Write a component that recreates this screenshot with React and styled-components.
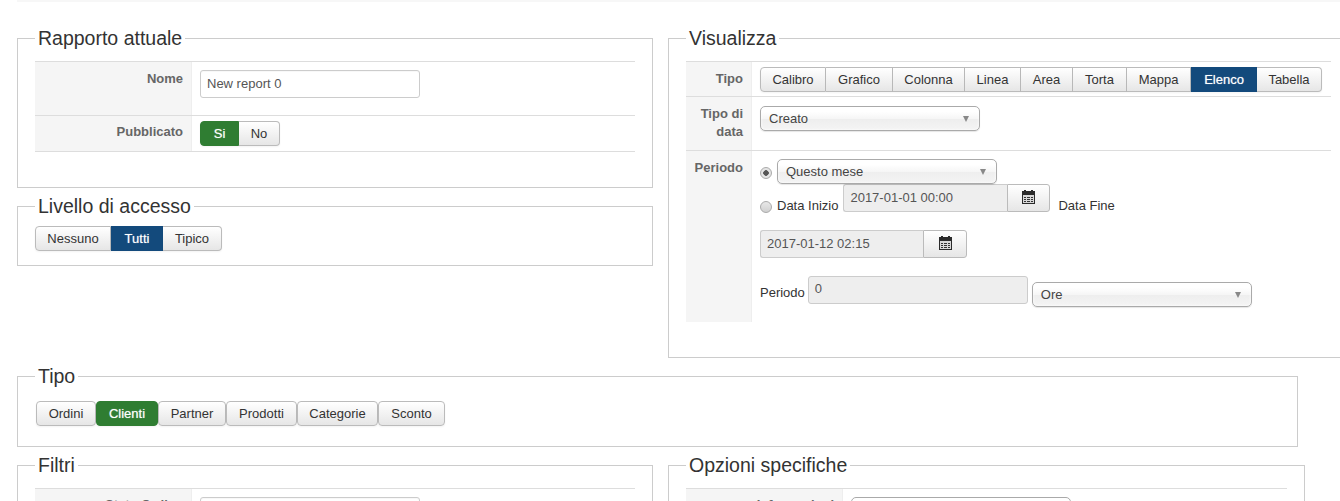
import React from 'react';
import styled, { createGlobalStyle } from 'styled-components';

const GlobalStyle = createGlobalStyle`
  html, body {
    margin: 0;
    height: 501px;
    overflow: hidden;
    background: #fff;
    font-family: "Liberation Sans", Arial, sans-serif;
    font-size: 13px;
    color: #515151;
  }
`;

const Page = styled.div`
  width: 1340px;
  height: 501px;
  overflow: hidden;
  padding-left: 17px;
  box-sizing: border-box;
`;

const TopStrip = styled.div`
  height: 2px;
  margin-bottom: 24px;
  background: #f7f7f7;
`;

const Row = styled.div`
  display: flex;
  align-items: flex-start;
  gap: 15px;
  width: 1400px;
`;

const Column = styled.div`
  width: ${(p) => p.$width}px;
  flex: none;
`;

const Fieldset = styled.fieldset`
  box-sizing: border-box;
  width: ${(p) => (p.$width ? `${p.$width}px` : '100%')};
  height: ${(p) => p.$height}px;
  margin: ${(p) => p.$mt || 0}px 0 ${(p) => p.$mb || 0}px;
  padding: 0 17px;
  border: 1px solid #ccc;
`;

const Legend = styled.legend`
  padding: 0 3px;
  font-size: 19.5px;
  line-height: 24px;
  color: #333;
`;

const Table = styled.div`
  border-top: 1px solid #ddd;
  margin-top: 11px;
  width: ${(p) => (p.$width ? `${p.$width}px` : 'auto')};
`;

const TableRow = styled.div`
  display: flex;
  height: ${(p) => p.$height}px;
  box-sizing: border-box;
  border-bottom: ${(p) => (p.$open ? '0' : '1px solid #ddd')};
`;

const Label = styled.div`
  flex: none;
  box-sizing: border-box;
  width: ${(p) => p.$width}px;
  padding: ${(p) => p.$pad || 8}px 8px 0 0;
  background: #f5f5f5;
  border-right: 1px solid #eee;
  text-align: right;
  font-weight: bold;
  line-height: 18px;
  color: #666;
`;

const Cell = styled.div`
  flex: 1;
  min-width: 0;
  padding: ${(p) => p.$pad || '8px'} 8px 0;
`;

const TextInput = styled.input`
  display: block;
  box-sizing: border-box;
  width: 220px;
  height: 28px;
  padding: 0 6px 2px;
  border: 1px solid #ccc;
  border-radius: 3px;
  background: #fff;
  font: 13px "Liberation Sans", Arial, sans-serif;
  color: #555;
  box-shadow: inset 0 1px 1px rgba(0, 0, 0, 0.03);
`;

const ButtonGroup = styled.div`
  display: inline-flex;
  vertical-align: top;
  margin: ${(p) => p.$margin || '0'};
`;

const Btn = styled.button`
  box-sizing: border-box;
  height: 25px;
  padding: 0;
  width: ${(p) => p.$width}px;
  font: 13px "Liberation Sans", Arial, sans-serif;
  color: ${(p) => (p.$active ? '#fff' : '#333')};
  border: 1px solid ${(p) => (p.$active ? p.$active : '#bbb')};
  border-left-width: ${(p) => (p.$first || p.$active ? 1 : 0)}px;
  background: ${(p) => p.$active || 'linear-gradient(#fff, #e6e6e6)'};
  border-radius: ${(p) => (p.$first ? '4px 0 0 4px' : p.$last ? '0 4px 4px 0' : '0')};
  box-shadow: 0 1px 2px rgba(0, 0, 0, 0.05);
  text-shadow: ${(p) => (p.$active ? '0 0 1px rgba(255,255,255,.6)' : 'none')};
`;

const SoloBtn = styled(Btn)`
  border-left-width: 1px;
  border-radius: 4px;
`;

const SelectBox = styled.div`
  position: relative;
  box-sizing: border-box;
  flex: none;
  width: ${(p) => p.$width || 220}px;
  height: 25px;
  margin-top: ${(p) => p.$mt || 0}px;
  padding-left: 8px;
  line-height: 23px;
  color: #444;
  border: 1px solid #aaa;
  border-radius: 5px;
  background: linear-gradient(#fff 20%, #f6f6f6 50%, #eee 52%, #f4f4f4 100%);
  box-shadow: inset 0 0 3px #fff, 0 1px 1px rgba(0, 0, 0, 0.1);
  &::after {
    content: '';
    position: absolute;
    right: 10px;
    top: 9px;
    border-left: 3.5px solid transparent;
    border-right: 3.5px solid transparent;
    border-top: 6px solid #888;
  }
`;

const Line = styled.div`
  display: flex;
  align-items: flex-start;
  margin-bottom: ${(p) => p.$mb || 0}px;
`;

const Radio = styled.span`
  flex: none;
  box-sizing: border-box;
  width: 12px;
  height: 12px;
  margin-right: 5px;
  margin-top: ${(p) => p.$mt}px;
  border-radius: 50%;
  border: 1px solid #aaa;
  background: ${(p) =>
    p.$checked
      ? 'radial-gradient(circle, #555 0 2.5px, #e4e4e4 3px)'
      : 'linear-gradient(#e8e8e8, #d0d0d0)'};
`;

const InlineText = styled.span`
  flex: none;
  margin: ${(p) => p.$margin || '0'};
  line-height: 18px;
  color: #333;
`;

const DateWrap = styled.div`
  display: flex;
  flex: none;
`;

const DateInput = styled.div`
  box-sizing: border-box;
  width: ${(p) => p.$width}px;
  height: 28px;
  padding: 5px 6px 0;
  line-height: 16px;
  color: #555;
  background: #eee;
  border: 1px solid #ccc;
  border-right: 0;
  border-radius: 3px 0 0 3px;
`;

const DateButton = styled.div`
  box-sizing: border-box;
  width: ${(p) => p.$width}px;
  height: 28px;
  padding-top: 5px;
  text-align: center;
  border: 1px solid #bbb;
  border-radius: 0 3px 3px 0;
  background: linear-gradient(#fff, #e6e6e6);
`;

const PeriodInput = styled(DateInput)`
  width: 220px;
  margin-right: 4px;
  border-right: 1px solid #ccc;
  border-radius: 3px;
  padding-top: 4px;
`;

const CalendarIcon = () => (
  <svg width="13" height="14" viewBox="0 0 13 14">
    <rect x="0" y="1" width="13" height="13" fill="#2b2b2b" />
    <rect x="2" y="0" width="2" height="3" fill="#2b2b2b" />
    <rect x="9" y="0" width="2" height="3" fill="#2b2b2b" />
    <rect x="1" y="5" width="11" height="8" fill="#d8d8d8" />
    <path d="M2 7.5h9M2 9.5h9M2 11.5h9" stroke="#333" strokeWidth="1" />
    <path d="M4.5 6v6M8.5 6v6" stroke="#d8d8d8" strokeWidth="1" />
  </svg>
);

const chartTypes = [
  ['Calibro', 66],
  ['Grafico', 67],
  ['Colonna', 72],
  ['Linea', 56],
  ['Area', 52],
  ['Torta', 54],
  ['Mappa', 64],
  ['Elenco', 66],
  ['Tabella', 65],
];

const reportTypes = [
  ['Ordini', 60],
  ['Clienti', 62],
  ['Partner', 68],
  ['Prodotti', 71],
  ['Categorie', 81],
  ['Sconto', 67],
];

const DateField = ({ value, width, buttonWidth }) => (
  <DateWrap>
    <DateInput $width={width}>{value}</DateInput>
    <DateButton $width={buttonWidth}>
      <CalendarIcon />
    </DateButton>
  </DateWrap>
);

export default function App() {
  return (
    <Page>
      <GlobalStyle />
      <TopStrip />
      <Row>
        <Column $width={636}>
          <Fieldset $height={162} $mb={6}>
            <Legend>Rapporto attuale</Legend>
            <Table>
              <TableRow $height={54}>
                <Label $width={157}>Nome</Label>
                <Cell>
                  <TextInput defaultValue="New report 0" />
                </Cell>
              </TableRow>
              <TableRow $height={36}>
                <Label $width={157} $pad={7}>Pubblicato</Label>
                <Cell $pad="5px">
                  <ButtonGroup>
                    <Btn $first $active="#2f7d32" $width={39}>Si</Btn>
                    <Btn $last $width={41}>No</Btn>
                  </ButtonGroup>
                </Cell>
              </TableRow>
            </Table>
          </Fieldset>
          <Fieldset $height={72}>
            <Legend>Livello di accesso</Legend>
            <ButtonGroup $margin="8px 0 0">
              <Btn $first $width={76}>Nessuno</Btn>
              <Btn $active="#134a7c" $width={52}>Tutti</Btn>
              <Btn $last $width={59}>Tipico</Btn>
            </ButtonGroup>
          </Fieldset>
        </Column>
        <Column $width={681}>
          <Fieldset $height={332}>
            <Legend>Visualizza</Legend>
            <Table $width={645}>
              <TableRow $height={35}>
                <Label $width={66}>Tipo</Label>
                <Cell $pad="5px">
                  <ButtonGroup>
                    {chartTypes.map(([name, width], i) => (
                      <Btn
                        key={name}
                        $width={width}
                        $first={i === 0}
                        $last={i === chartTypes.length - 1}
                        $active={name === 'Elenco' ? '#134a7c' : undefined}
                      >
                        {name}
                      </Btn>
                    ))}
                  </ButtonGroup>
                </Cell>
              </TableRow>
              <TableRow $height={54}>
                <Label $width={66}>Tipo di data</Label>
                <Cell $pad="9px">
                  <SelectBox>Creato</SelectBox>
                </Cell>
              </TableRow>
              <TableRow $height={171} $open>
                <Label $width={66}>Periodo</Label>
                <Cell>
                  <Line>
                    <Radio $checked $mt={8} />
                    <SelectBox>Questo mese</SelectBox>
                  </Line>
                  <Line $mb={15}>
                    <Radio $mt={17} />
                    <InlineText $margin="13px 5px 0 0">Data Inizio</InlineText>
                    <DateField value="2017-01-01 00:00" width={164} buttonWidth={43} />
                    <InlineText $margin="13px 0 0 8px">Data Fine</InlineText>
                  </Line>
                  <Line $mb={18}>
                    <DateField value="2017-01-12 02:15" width={163} buttonWidth={44} />
                  </Line>
                  <Line>
                    <InlineText $margin="8px 3px 0 0">Periodo</InlineText>
                    <PeriodInput>0</PeriodInput>
                    <SelectBox $mt={6}>Ore</SelectBox>
                  </Line>
                </Cell>
              </TableRow>
            </Table>
          </Fieldset>
        </Column>
      </Row>
      <Fieldset $width={1281} $height={83} $mt={6} $mb={6}>
        <Legend>Tipo</Legend>
        <ButtonGroup $margin="13px 0 0 1px">
          {reportTypes.map(([name, width]) => (
            <SoloBtn
              key={name}
              $width={width}
              $active={name === 'Clienti' ? '#2f7d32' : undefined}
            >
              {name}
            </SoloBtn>
          ))}
        </ButtonGroup>
      </Fieldset>
      <Row>
        <Column $width={636}>
          <Fieldset $height={80}>
            <Legend>Filtri</Legend>
            <Table>
              <TableRow $height={54}>
                <Label $width={157} $pad={7}>Stato Ordine</Label>
                <Cell>
                  <TextInput />
                </Cell>
              </TableRow>
            </Table>
          </Fieldset>
        </Column>
        <Column $width={637}>
          <Fieldset $height={80}>
            <Legend>Opzioni specifiche</Legend>
            <Table>
              <TableRow $height={54}>
                <Label $width={157} $pad={7}>Informazioni</Label>
                <Cell>
                  <SelectBox />
                </Cell>
              </TableRow>
            </Table>
          </Fieldset>
        </Column>
      </Row>
    </Page>
  );
}
